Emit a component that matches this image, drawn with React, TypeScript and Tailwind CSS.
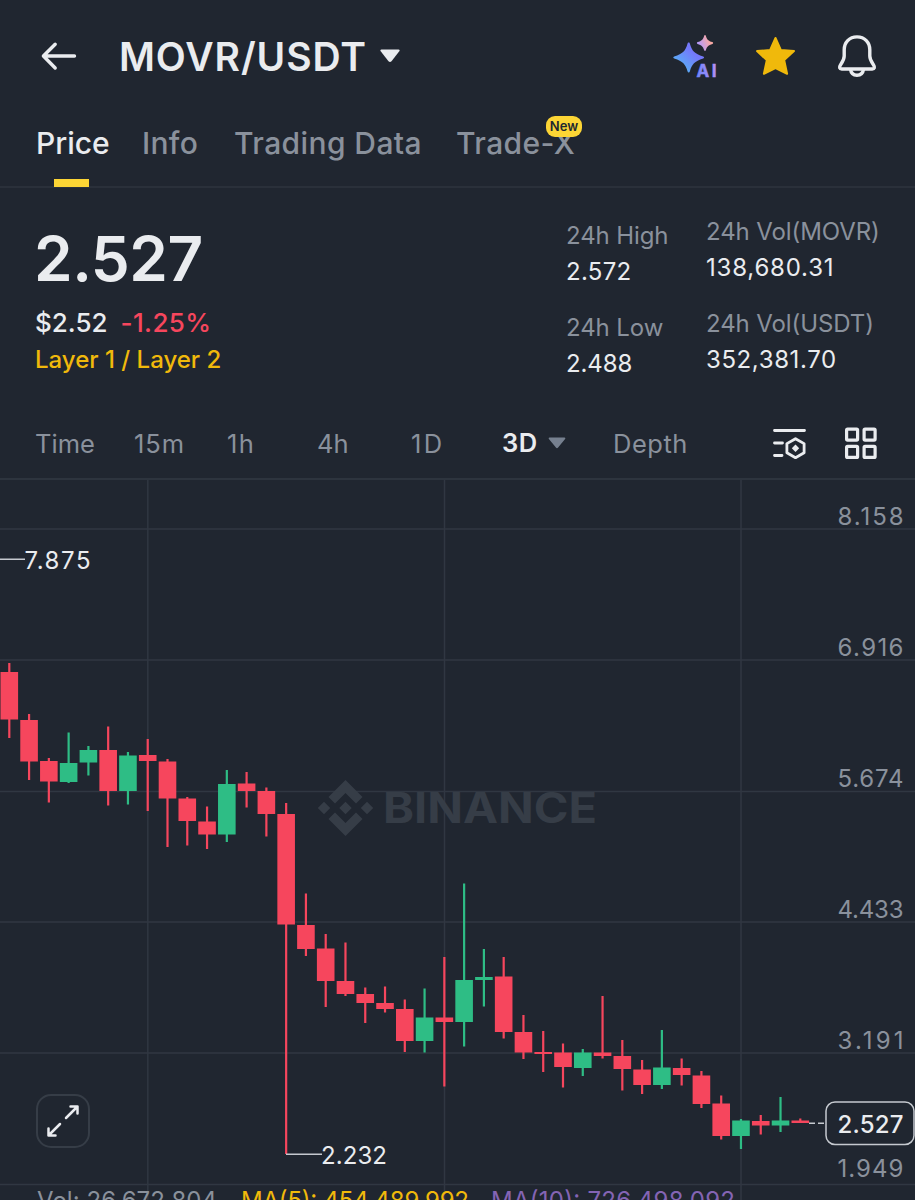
import clsx from "clsx";

type Candle = [high: number, top: number, bottom: number, low: number, up?: 1];

const CANDLES: Candle[] = [
  [663, 672, 719.5, 738],
  [714, 720, 761.5, 780],
  [758, 761, 781.5, 802.5],
  [732.5, 763, 782, 783, 1],
  [746, 750, 762.5, 775.5, 1],
  [726.5, 750, 791, 805.5],
  [752, 755.5, 791, 804.5, 1],
  [739, 755, 761, 811],
  [759, 761.5, 798.5, 847],
  [797, 798.5, 821, 845.5],
  [806.5, 821.5, 834.5, 849],
  [770, 784, 834.5, 842, 1],
  [772, 783.5, 791, 807.5],
  [787.5, 791, 814, 836.5],
  [803, 814, 924.5, 1154],
  [893.5, 925, 949, 956],
  [934, 948.5, 981, 1007],
  [942.5, 981, 994, 996],
  [987.5, 994, 1003, 1023],
  [986.5, 1003, 1009, 1012.5],
  [999.5, 1009, 1041, 1052],
  [988.5, 1017.5, 1041, 1052.5, 1],
  [957, 1017.5, 1022, 1086.5],
  [883.5, 980, 1022, 1046.5, 1],
  [949, 977, 980, 1006.5, 1],
  [957, 976.5, 1032, 1038.5],
  [1015, 1032, 1052.5, 1059],
  [1031, 1052, 1054, 1072],
  [1043.5, 1052.5, 1067, 1087.5],
  [1049, 1052.5, 1068, 1076, 1],
  [996, 1052.5, 1056, 1058.5],
  [1040, 1056, 1069, 1090.5],
  [1060, 1069.5, 1085, 1094],
  [1030, 1067.5, 1085, 1089, 1],
  [1058.5, 1068, 1075, 1085.5],
  [1071, 1075.5, 1104, 1108],
  [1095.5, 1103.5, 1136, 1139.5],
  [1119, 1120.5, 1136, 1149, 1],
  [1115, 1121, 1125.5, 1134.5],
  [1097, 1120.5, 1125.5, 1132, 1],
  [1118.5, 1120.5, 1123, 1123],
];

const AXIS = [
  { label: "8.158", line: 529, y: 525 },
  { label: "6.916", line: 660, y: 656 },
  { label: "5.674", line: 791.5, y: 786.5 },
  { label: "4.433", line: 922, y: 918 },
  { label: "3.191", line: 1053, y: 1048.5 },
  { label: "1.949", line: 1184.5, y: 1177 },
];

const TABS = [
  { label: "Price", className: "w-[106px] text-[#eaecef]" },
  { label: "Info", className: "w-[92px] text-[#8a919c] tracking-[0.3px]" },
  { label: "Trading Data", className: "w-[222px] text-[#8a919c] tracking-[0.4px]" },
  { label: "Trade-X", className: "text-[#8a919c] tracking-[0.4px]" },
];

const INTERVALS = [
  { label: "Time", className: "w-[99px]" },
  { label: "15m", className: "w-[93px] tracking-[1px]" },
  { label: "1h", className: "w-[90px] tracking-[1.5px]" },
  { label: "4h", className: "w-[94px]" },
  { label: "1D", className: "w-[90px] tracking-[2.5px]" },
];

function Header() {
  return (
    <header className="flex h-28 items-center pl-[41px] pr-[38px]">
      <svg width="36" height="30" viewBox="0 0 36 30" fill="none" stroke="#eaecef" strokeWidth="3.4" strokeLinecap="round" strokeLinejoin="round">
        <path d="M33.5 15H2.8M14.2 3.2L2.4 15l11.8 12" />
      </svg>
      <h1 className="ml-[42px] w-[247px] whitespace-nowrap pt-px text-[39px] font-semibold leading-none tracking-[0.9px]">
        MOVR/USDT
      </h1>
      <svg className="ml-[14px]" width="20" height="14" viewBox="0 0 20 14" fill="#eaecef">
        <path d="M1.5 0.5h17q1.7 0.3 0.8 1.8L11.5 12.2q-1.5 1.6-3 0L0.7 2.3Q-0.2 0.8 1.5 0.5z" />
      </svg>
      <div className="ml-auto flex items-center">
        <AiIcon />
        <svg className="ml-[38px]" width="41" height="42" viewBox="0 0 41 42" fill="#f0b90b" stroke="#f0b90b" strokeWidth="2" strokeLinejoin="round">
          <path d="M20.5 3l5.3 11.9 13.2 1.2-9.8 9 2.9 13.7-11.6-5.7-11.6 5.7 2.9-13.7-9.8-9 13.2-1.2z" />
        </svg>
        <svg className="ml-[41px]" width="40" height="44" viewBox="0 0 40 44" fill="none" stroke="#eaecef" strokeWidth="3.4" strokeLinejoin="round">
          <path d="M20 2.900C12.200 2.900 7.200 8.500 7.200 15.800v6.300c0 3.600-1.600 5.700-3.600 8.600-1.700 2.600-1.200 4.300 1.200 4.300h30.400c2.400 0 2.900-1.700 1.200-4.300-2-2.900-3.600-5-3.600-8.600v-6.300C32.800 8.500 27.800 2.900 20 2.900z" />
          <path d="M13.500 35.300c0.500 3.800 3.200 5.900 6.500 5.900s6-2.100 6.500-5.900" />
        </svg>
      </div>
    </header>
  );
}

function AiIcon() {
  return (
    <svg width="44" height="44" viewBox="0 0 44 44">
      <defs>
        <linearGradient id="spark" x1="0" y1="1" x2="1" y2="0">
          <stop offset="0.1" stopColor="#53b9f5" />
          <stop offset="0.65" stopColor="#7479fa" />
        </linearGradient>
        <linearGradient id="spark-small" x1="0" y1="0.7" x2="1" y2="0.3">
          <stop offset="0.15" stopColor="#b79af8" />
          <stop offset="0.8" stopColor="#f8a9a4" />
        </linearGradient>
        <linearGradient id="ai" x1="0" y1="0.6" x2="1" y2="0.4">
          <stop offset="0" stopColor="#6f86fa" />
          <stop offset="1" stopColor="#b78ff5" />
        </linearGradient>
      </defs>
      <path fill="url(#spark)" d="M15.700 8.500c0.700 0 1 0.500 1.200 1.200 2 7 4.500 10 13.300 12.800 1.200 0.500 1.200 1.600 0 2-8.800 2.800-11.300 5.800-13.300 12.800-0.400 1.600-2 1.600-2.400 0-2-7-4.500-10-13.300-12.800-1.200-0.400-1.200-1.500 0-2 8.800-2.800 11.300-5.800 13.300-12.800 0.200-0.700 0.500-1.200 1.200-1.200z" />
      <path fill="url(#spark-small)" d="M32 1c0.500 0 0.700 0.400 0.900 1 1 3.500 2.500 5 6.500 6.100 1 0.400 1 1.400 0 1.800-4 1.100-5.500 2.600-6.500 6.100-0.300 1.200-1.500 1.200-1.800 0-1-3.500-2.500-5-6.500-6.100-1-0.400-1-1.400 0-1.800 4-1.100 5.500-2.600 6.500-6.100 0.200-0.600 0.400-1 0.900-1z" />
      <text x="23.500" y="42.500" fill="url(#ai)" stroke="url(#ai)" strokeWidth="0.500" fontSize="17" fontWeight="700" textLength="20">
        AI
      </text>
    </svg>
  );
}

function Tabs() {
  return (
    <nav className="relative h-[76px] border-b-2 border-[#2a303a] pl-9">
      <div className="flex h-[61px] items-center whitespace-nowrap pt-px text-[30px] font-medium">
        {TABS.map((tab) => (
          <span key={tab.label} className={tab.className}>
            {tab.label}
          </span>
        ))}
      </div>
      <span className="absolute bottom-[-1px] left-[54px] h-2 w-[35px] bg-[#fcd535]" />
      <span className="absolute left-[546px] top-1 flex h-[21px] w-9 items-center justify-center rounded-[9px] bg-[#fcd535] text-[13px] font-semibold text-[#202630]">
        New
      </span>
    </nav>
  );
}

function Stat({ label, value, className }: { label: string; value: string; className?: string }) {
  return (
    <div className="whitespace-nowrap text-[24px] leading-9">
      <div className="tracking-[-0.1px] text-[#8a919c]">{label}</div>
      <div className={className}>{value}</div>
    </div>
  );
}

function Summary() {
  return (
    <section className="flex h-[220px] pl-[35px]">
      <div className="w-[531px] whitespace-nowrap pt-9">
        <div className="-ml-px text-[62px] font-semibold leading-[70px] tracking-[-0.500px]">2.527</div>
        <div className="mt-[11px] flex gap-[13px] text-[26px] font-medium leading-9">
          <span>$2.52</span>
          <span className="tracking-[0.4px] text-[#f6465d]">-1.25%</span>
        </div>
        <div className="text-[24px] font-medium leading-[38px] text-[#f0b90b]">Layer 1 / Layer 2</div>
      </div>
      <div className="flex w-[140px] flex-col gap-5 pt-[30px]">
        <Stat label="24h High" value="2.572" className="tracking-[0.3px]" />
        <Stat label="24h Low" value="2.488" className="tracking-[-0.1px]" />
      </div>
      <div className="flex flex-col gap-5 pt-[26px]">
        <Stat label="24h Vol(MOVR)" value="138,680.31" className="tracking-[0.8px]" />
        <Stat label="24h Vol(USDT)" value="352,381.70" className="tracking-[0.6px]" />
      </div>
    </section>
  );
}

function Toolbar() {
  return (
    <div className="flex h-[72px] items-center border-b-2 border-[#2d343e] pl-[35px] pr-[37px] text-[25.500px] text-[#8a919c]">
      {INTERVALS.map((item) => (
        <span key={item.label} className={clsx("pt-0.5", item.className)}>
          {item.label}
        </span>
      ))}
      <span className="ml-px w-[46px] pt-px font-semibold tracking-[0.5px] text-[#eaecef]">3D</span>
      <svg className="mr-[47px]" width="18" height="12" viewBox="0 0 18 12" fill="#76808f">
        <path d="M1.500 0.500h15q1.500 0.300 0.600 1.600l-7 8.500q-1.100 1.200-2.200 0l-7-8.500q-0.900-1.300 0.600-1.600z" />
      </svg>
      <span className="pt-0.5 tracking-[0.5px]">Depth</span>
      <div className="ml-auto flex items-center gap-[37px]">
        <svg width="36" height="34" viewBox="0 0 36 34" fill="none" stroke="#eaecef" strokeWidth="2.800" strokeLinecap="round">
          <path d="M3.500 4.500h30M3.500 17h8M3.500 29.500h7.500" />
          <path strokeLinejoin="round" d="M24.500 12.700l8.600 4.900v9.200l-8.600 4.900-8.600-4.900v-9.200z" />
          <path fill="#eaecef" stroke="none" d="M24.500 18.500l3.700 3.700-3.700 3.700-3.700-3.700z" />
        </svg>
        <svg width="34" height="34" viewBox="0 0 34 34" fill="none" stroke="#eaecef" strokeWidth="3.200">
          <rect x="2.600" y="3.100" width="11" height="11" rx="1" />
          <rect x="20.100" y="3.100" width="11" height="11" rx="1" />
          <rect x="2.600" y="20.400" width="11" height="11" rx="1" />
          <rect x="20.100" y="20.400" width="11" height="11" rx="1" />
        </svg>
      </div>
    </div>
  );
}

function Chart() {
  return (
    <svg className="block" width="915" height="720" viewBox="0 480 915 720" fontSize="24">
      <g stroke="#303742" strokeWidth="1.500">
        {AXIS.map((row) => (
          <line key={row.label} x1="0" x2="915" y1={row.line} y2={row.line} />
        ))}
        {[147.8, 444.5, 741].map((x) => (
          <line key={x} x1={x} x2={x} y1="480" y2="1200" />
        ))}
      </g>

      <g fill="#363d47">
        <path d="M345.500 780l17 17-6.500 6.500-10.500-10.500-10.500 10.500-6.500-6.500z" />
        <path d="M345.500 836l17-17-6.500-6.500-10.500 10.500-10.500-10.500-6.500 6.500z" />
        <path d="M324 801.800l6.200 6.200-6.200 6.200-6.200-6.200zM345.500 801.800l6.200 6.200-6.200 6.200-6.200-6.200zM367 801.800l6.200 6.200-6.200 6.200-6.200-6.200z" />
        <text x="383" y="823" fontSize="42" fontWeight="700" textLength="214" lengthAdjust="spacingAndGlyphs">
          BINANCE
        </text>
      </g>

      {CANDLES.map(([high, top, bottom, low, up], i) => {
        const x = 9.3 + i * 19.775;
        return (
          <g key={i} className={clsx(up ? "fill-[#2ebd85]" : "fill-[#f6465d]")}>
            <rect x={x - 1.1} y={high} width="2.200" height={low - high} />
            <rect x={x - 8.8} y={top} width="17.600" height={bottom - top} />
          </g>
        );
      })}

      <g fill="#8a919c">
        {AXIS.map((row) => (
          <text key={row.label} x="837.500" y={row.y} textLength="66">
            {row.label}
          </text>
        ))}
      </g>

      <g stroke="#c5c9cf" strokeWidth="1.500">
        <path d="M0 559.300h25M286 1154.200h36M809 1123.200h6M818 1123.200h6" />
      </g>
      <g fill="#eaecef">
        <text x="24.500" y="569" textLength="66">7.875</text>
        <text x="321" y="1164" textLength="66">2.232</text>
        <rect x="826" y="1102" width="88" height="42.500" rx="9" fill="#202630" stroke="#c5c9cf" strokeWidth="1.500" />
        <text x="837.500" y="1132.500" textLength="66" fontWeight="500">2.527</text>
      </g>

      <rect x="37" y="1095" width="52" height="52" rx="14" fill="#202630" stroke="#363d47" strokeWidth="2" />
      <g fill="none" stroke="#eaecef" strokeWidth="2.500" strokeLinecap="round" strokeLinejoin="round">
        <path d="M66 1118l11.500-11.500M70.500 1106.500h7v7M60 1124l-11.500 11.500M48.500 1128.500v7h7" />
      </g>

      <text x="37" y="1209" fill="#8a919c" textLength="180">Vol: 26,672,804</text>
      <text x="241" y="1209" fill="#f0b90b" textLength="228">MA(5): 454,489.992</text>
      <text x="491" y="1209" fill="#8464b4" textLength="244">MA(10): 726,498.092</text>
    </svg>
  );
}

export default function App() {
  return (
    <main className="h-[1200px] w-[915px] overflow-hidden bg-[#202630] font-['Inter',sans-serif] text-[#eaecef]">
      <Header />
      <Tabs />
      <Summary />
      <Toolbar />
      <Chart />
    </main>
  );
}
